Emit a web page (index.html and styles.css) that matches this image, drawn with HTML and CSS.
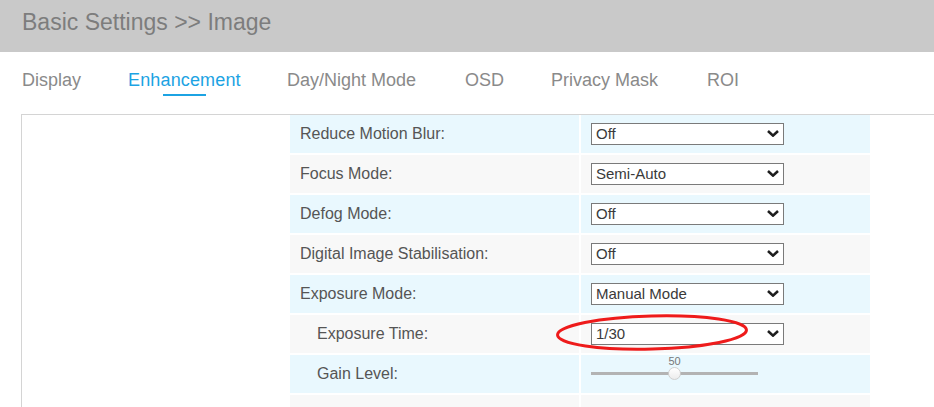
FILE: index.html
```html
<!DOCTYPE html>
<html>
<head>
<meta charset="utf-8">
<link rel="stylesheet" href="styles.css">
</head>
<body>
<header class="topbar"><h1 class="title">Basic Settings &gt;&gt; Image</h1></header>
<nav class="tabs">
  <div class="tab t-display"><div class="tab-inner"><span class="tab-label">Display</span><span class="bar"></span></div></div>
  <div class="tab t-enh active"><div class="tab-inner"><span class="tab-label">Enhancement</span><span class="bar"></span></div></div>
  <div class="tab t-day"><div class="tab-inner"><span class="tab-label">Day/Night Mode</span><span class="bar"></span></div></div>
  <div class="tab t-osd"><div class="tab-inner"><span class="tab-label">OSD</span><span class="bar"></span></div></div>
  <div class="tab t-priv"><div class="tab-inner"><span class="tab-label">Privacy Mask</span><span class="bar"></span></div></div>
  <div class="tab t-roi"><div class="tab-inner"><span class="tab-label">ROI</span><span class="bar"></span></div></div>
</nav>
<section class="panel">
  <div class="grid">
    <div class="cell blue label">Reduce Motion Blur:</div>
    <div class="cell blue value"><div class="select"><span>Off</span><svg class="chev" viewBox="0 0 12 7"><path d="M1 1 L6 5.6 L11 1" /></svg></div></div>

    <div class="cell gray label">Focus Mode:</div>
    <div class="cell gray value"><div class="select"><span>Semi-Auto</span><svg class="chev" viewBox="0 0 12 7"><path d="M1 1 L6 5.6 L11 1" /></svg></div></div>

    <div class="cell blue label">Defog Mode:</div>
    <div class="cell blue value"><div class="select"><span>Off</span><svg class="chev" viewBox="0 0 12 7"><path d="M1 1 L6 5.6 L11 1" /></svg></div></div>

    <div class="cell gray label">Digital Image Stabilisation:</div>
    <div class="cell gray value"><div class="select"><span>Off</span><svg class="chev" viewBox="0 0 12 7"><path d="M1 1 L6 5.6 L11 1" /></svg></div></div>

    <div class="cell blue label">Exposure Mode:</div>
    <div class="cell blue value"><div class="select"><span>Manual Mode</span><svg class="chev" viewBox="0 0 12 7"><path d="M1 1 L6 5.6 L11 1" /></svg></div></div>

    <div class="cell gray label sub">Exposure Time:</div>
    <div class="cell gray value marked">
      <div class="select"><span>1/30</span><svg class="chev" viewBox="0 0 12 7"><path d="M1 1 L6 5.6 L11 1" /></svg></div>
      <svg class="ring" width="200" height="42" viewBox="0 0 200 42"><ellipse cx="100" cy="20.5" rx="94.5" ry="16.5" transform="rotate(-1.5 100 20.5)" /></svg>
    </div>

    <div class="cell blue label sub">Gain Level:</div>
    <div class="cell blue value">
      <div class="slider">
        <span class="slider-val">50</span>
        <div class="track"><span class="thumb"></span></div>
      </div>
    </div>

    <div class="cell gray label"></div>
    <div class="cell gray value"></div>
  </div>
</section>
</body>
</html>
```
FILE: styles.css
```css
html, body {
  margin: 0;
  padding: 0;
  background: #ffffff;
  overflow: hidden;
  font-family: "Liberation Sans", Arial, sans-serif;
}

.topbar {
  height: 52px;
  background: #c9c9c9;
  box-sizing: border-box;
  padding: 9px 0 0 22px;
}

.title {
  margin: 0;
  font-size: 23px;
  line-height: 26px;
  font-weight: normal;
  color: #7d7d7d;
}

.tabs {
  display: flex;
  padding: 18px 0 0 22px;
}

.tab { flex: none; }
.t-display { width: 106px; }
.t-enh { width: 159px; }
.t-day { width: 178px; }
.t-osd { width: 86px; }
.t-priv { width: 156px; }

.tab-inner {
  display: inline-flex;
  flex-direction: column;
  align-items: center;
}

.tab-label {
  font-size: 18px;
  line-height: 20px;
  color: #8a8a8a;
  white-space: nowrap;
}

.t-enh .tab-label { letter-spacing: 0.15px; }

.bar {
  margin-top: 4px;
  width: 0;
  height: 2px;
}

.tab.active .tab-label {
  color: #1ca3e3;
}

.tab.active .bar {
  width: 43px;
  background: #1ca3e3;
}

.panel {
  margin: 18px 0 0 21px;
  border-top: 1px solid #d4d4d4;
  border-left: 1px solid #d4d4d4;
  height: 400px;
}

.grid {
  margin-left: 268px;
  display: grid;
  grid-template-columns: 289px 289px;
  grid-auto-rows: 38px;
  column-gap: 2px;
  row-gap: 2px;
}

.cell {
  display: flex;
  align-items: center;
  box-sizing: border-box;
}

.blue { background: #e9f8fe; }
.gray { background: #f8f8f8; }

.label {
  padding-left: 10px;
  font-size: 16px;
  color: #555555;
  white-space: nowrap;
}

.label.sub {
  padding-left: 27px;
}

.value {
  padding-left: 10px;
}

.marked {
  position: relative;
}

.select {
  width: 193px;
  height: 22px;
  box-sizing: border-box;
  border: 1px solid #7a7a7a;
  background: #ffffff;
  display: flex;
  align-items: center;
  justify-content: space-between;
  padding: 0 4px 1px 4px;
  margin-top: -1px;
  font-size: 15px;
  color: #3a3a3a;
}

.chev {
  width: 12px;
  height: 7px;
}

.chev path {
  fill: none;
  stroke: #1e1e1e;
  stroke-width: 2.6;
}

.ring {
  position: absolute;
  left: -29px;
  top: -3px;
  pointer-events: none;
}

.ring ellipse {
  fill: none;
  stroke: #ee1b1b;
  stroke-width: 3;
}

.slider {
  width: 167px;
  display: flex;
  flex-direction: column;
  align-items: center;
  margin-top: -18px;
}

.slider-val {
  font-size: 11px;
  line-height: 12px;
  color: #777777;
  margin-bottom: 5px;
}

.track {
  width: 167px;
  height: 3px;
  background: #b3b3b3;
  display: flex;
  align-items: center;
  justify-content: center;
}

.thumb {
  width: 13px;
  height: 13px;
  border-radius: 50%;
  box-sizing: border-box;
  border: 1px solid #cfcfcf;
  background: linear-gradient(#ffffff, #ececec);
  margin-left: -1px;
}
```
